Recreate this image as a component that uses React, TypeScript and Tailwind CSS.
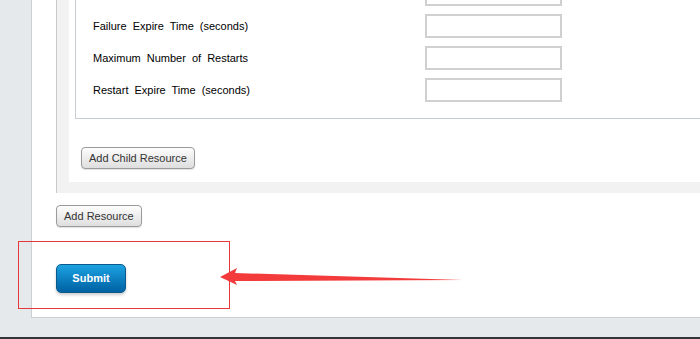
const labelFont = { fontFamily: '"Liberation Sans", Arial, sans-serif' }

const rows = [
    '',
    'Failure Expire Time (seconds)',
    'Maximum Number of Restarts',
    'Restart Expire Time (seconds)',
]

const GrayButton = ({ label }: { label: string }) => (
    <button
        className="h-[22px] px-[7px] rounded-[4px] border border-[#9a9a9a] bg-gradient-to-b from-[#fdfdfd] to-[#dedede] text-[11px] text-[#333] shadow-[0_1px_1px_rgba(0,0,0,0.12)]"
        style={labelFont}
    >
        {label}
    </button>
)

const App = () => {
    return (
        <div className="relative w-[700px] h-[339px] overflow-hidden bg-[#e6e9ec] flex flex-col">
            <div className="h-[318px] ml-[31px] border-l border-b border-[#cdd0d3] bg-white flex flex-col justify-end pl-6 pb-[24px] overflow-hidden">
                {/* resource panel */}
                <div className="border-l border-[#c9c9c9] bg-[#f2f2f2] pl-3 pb-[11px]">
                    <div className="bg-white pl-[6px] pb-[13px] flex flex-col">
                        <div className="border-l border-b border-[#c8cdd1] pl-[17px] pb-[16px] flex flex-col gap-2">
                            {rows.map((row, index) => (
                                <div key={index} className="flex items-center h-6">
                                    <span
                                        className="w-[332px] text-[11px] text-black [word-spacing:3px]"
                                        style={labelFont}
                                    >
                                        {row}
                                    </span>
                                    <input className="w-[137px] h-6 border-2 border-[#cfd0d1] bg-white" />
                                </div>
                            ))}
                        </div>
                        <div className="flex mt-[28px] ml-[6px]">
                            <GrayButton label="Add Child Resource" />
                        </div>
                    </div>
                </div>
                <div className="flex mt-[12px]">
                    <GrayButton label="Add Resource" />
                </div>
                <div className="flex mt-[37px]">
                    <button
                        className="w-[70px] h-[29px] rounded-[5px] border border-[#0a5b8c] bg-gradient-to-b from-[#1da2e2] to-[#0061a3] text-white text-[11px] font-bold shadow-[0_2px_3px_rgba(0,0,0,0.2)]"
                        style={labelFont}
                    >
                        Submit
                    </button>
                </div>
            </div>
            <div className="mt-auto h-[2px] bg-[#333538]" />

            {/* annotation */}
            <div className="absolute left-[18px] top-[241px] w-[212px] h-[68px] border border-[#e8373a]" />
            <svg className="absolute left-0 top-0" width="700" height="339">
                <polygon
                    points="220,277 237,268 235,273 463,280 235,281 237,285"
                    fill="#f43b3b"
                />
            </svg>
        </div>
    )
}

export default App
